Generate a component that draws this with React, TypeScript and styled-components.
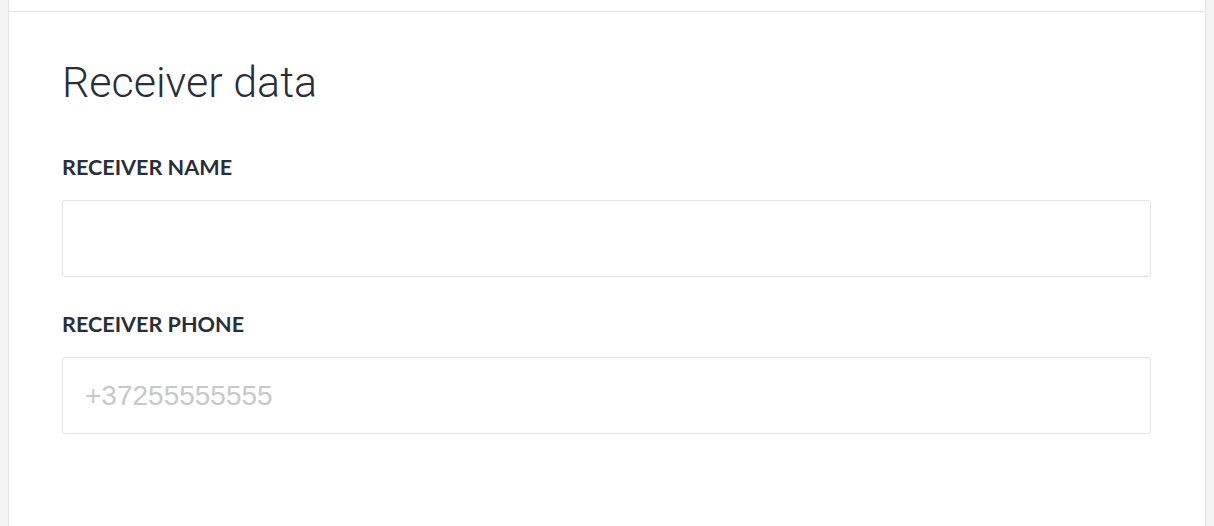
import React from "react";
import styled, { createGlobalStyle } from "styled-components";

const GlobalStyle = createGlobalStyle`
  html, body {
    margin: 0;
    padding: 0;
    background: #f3f3f3;
  }
  * {
    box-sizing: border-box;
  }
`;

const Page = styled.div`
  padding: 0 8px 0 8px;
  height: 526px;
  overflow: hidden;
`;

const Card = styled.div`
  background: #ffffff;
  border-left: 1px solid #e4e4e4;
  border-right: 1px solid #e4e4e4;
  width: 1198px;
  min-height: 526px;
`;

const PrevSection = styled.div`
  height: 12px;
  border-bottom: 1px solid #e4e4e4;
`;

const Section = styled.section`
  padding: 44px 53px 0 53px;
`;

const Title = styled.h2`
  margin: 0 0 46px 0;
  font-family: Roboto, "Liberation Sans", sans-serif;
  font-weight: 300;
  font-size: 43px;
  line-height: 52px;
  color: #2a2e38;
`;

const Field = styled.div`
  margin-bottom: 34px;
`;

const Label = styled.label`
  display: block;
  font-family: Lato, "Liberation Sans", sans-serif;
  font-weight: 700;
  font-size: 21.6px;
  line-height: 26px;
  color: #2a2e38;
  text-transform: uppercase;
  margin-bottom: 20px;
`;

const Input = styled.input`
  display: block;
  width: 1089px;
  height: 77px;
  border: 1px solid #e2e3e5;
  border-radius: 3px;
  padding: 0 22px;
  font-family: "Liberation Sans", Arial, sans-serif;
  font-size: 28px;
  color: #2a2e38;
  outline: none;
  &::placeholder {
    color: #c8c8c8;
  }
`;

export default function App(): JSX.Element {
  return (
    <>
      <GlobalStyle />
      <Page>
        <Card>
          <PrevSection />
          <Section>
            <Title>Receiver data</Title>
            <Field>
              <Label htmlFor="receiver-name">Receiver name</Label>
              <Input id="receiver-name" type="text" />
            </Field>
            <Field>
              <Label htmlFor="receiver-phone">Receiver phone</Label>
              <Input id="receiver-phone" type="tel" placeholder="+37255555555" />
            </Field>
          </Section>
        </Card>
      </Page>
    </>
  );
}
